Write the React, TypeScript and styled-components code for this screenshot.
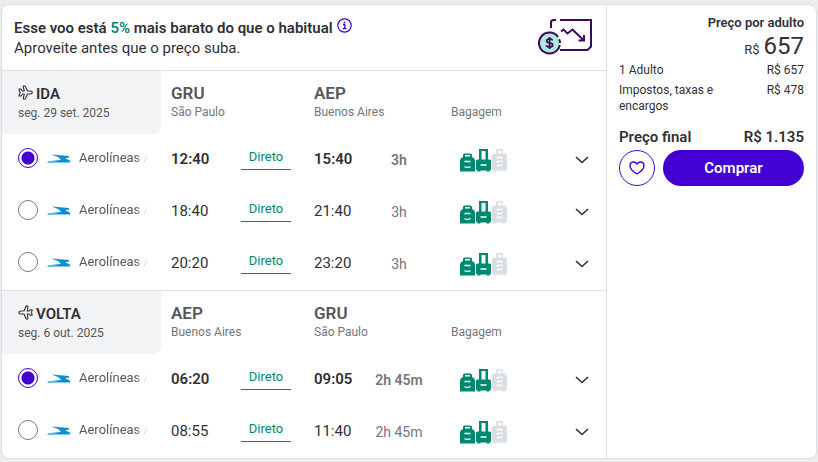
import React, { useState } from "react";
import styled, { createGlobalStyle } from "styled-components";

const color = {
  ink: "#303036",
  soft: "#55575c",
  muted: "#73767c",
  line: "#dadfe8",
  tab: "#f2f3f5",
  violet: "#4300d2",
  plum: "#3d0a5b",
  green: "#00876f",
  mint: "#aeeadb",
};

const GlobalStyle = createGlobalStyle`
  *, *::before, *::after { box-sizing: border-box; }
  body {
    margin: 0;
    background: #ededed;
    color: ${color.ink};
    font-family: Roboto, "Liberation Sans", sans-serif;
    font-size: 14px;
    line-height: 18px;
  }
  h2, h3, p, dl, dd, dt, fieldset { margin: 0; padding: 0; border: 0; font: inherit; min-width: 0; }
  svg { display: block; flex: none; }
`;

const Page = styled.main`
  padding: 4px 1px 3px;
`;
const Card = styled.article`
  display: grid;
  grid-template-columns: minmax(0, 1fr) 210px;
  border: 1px solid ${color.line};
  border-radius: 8px;
  background: #fff;
  overflow: hidden;
`;
const Trips = styled.div`
  min-width: 0;
`;
const Notice = styled.header`
  display: flex;
  align-items: center;
  justify-content: space-between;
  height: 65px;
  padding: 0 14px 1px 12px;
`;
const NoticeText = styled.p`
  font-size: 15px;
`;
const Headline = styled.span`
  display: flex;
  align-items: center;
  gap: 4px;
  font-weight: 600;
  em { font-style: normal; color: ${color.green}; }
`;
const InfoButton = styled.button`
  display: flex;
  padding: 0 0 6px;
  border: 0;
  background: none;
  cursor: pointer;
`;

const Leg = styled.fieldset`
  && { border-top: 1px solid ${color.line}; }
`;
const columns = "159px 80px 73px 56px 58px minmax(74px, 1fr) 44px";
const LegHeader = styled.header`
  display: grid;
  grid-template-columns: ${columns};
  height: 63px;
`;
const Tab = styled.div`
  padding: 13px 16px 0;
  background: ${color.tab};
  border-bottom-right-radius: 8px;
  color: ${color.soft};
  font-size: 12px;
`;
const TabTitle = styled.h2`
  display: flex;
  align-items: center;
  gap: 3px;
  height: 20px;
  color: ${color.ink};
  font-size: 15px;
  font-weight: 600;
  svg { margin-bottom: 4px; }
`;
const Place = styled.div<{ $inset?: boolean }>`
  grid-column: span 2;
  padding: 12px 0 0 ${(p) => (p.$inset ? "10px" : "0")};
  color: ${color.muted};
  font-size: 12px;
  white-space: nowrap;
`;
const Code = styled.h3`
  height: 20px;
  line-height: 20px;
  color: ${color.soft};
  font-size: 17px;
  font-weight: 600;
`;
const BagTitle = styled.div`
  align-self: end;
  padding: 0 0 13px 23px;
  color: ${color.muted};
  font-size: 12px;
`;

const Row = styled.div`
  display: grid;
  grid-template-columns: ${columns};
  align-items: center;
  height: 52px;
`;
const Carrier = styled.label`
  display: flex;
  align-items: center;
  height: 48px;
  padding: 0 12px 0 16px;
  align-self: start;
  cursor: pointer;
`;
const Radio = styled.input`
  appearance: none;
  flex: none;
  width: 20px;
  height: 20px;
  margin: 0 9px 0 0;
  border: 1px solid #77797f;
  border-radius: 50%;
  background: #fff;
  &:checked {
    border-color: ${color.violet};
    background: radial-gradient(circle, ${color.violet} 6px, #fff 7px);
  }
`;
const CarrierName = styled.span`
  flex: 1;
  min-width: 0;
  margin-left: 8px;
  white-space: nowrap;
  color: ${color.soft};
  font-size: 13px;
  mask-image: linear-gradient(to right, #000 80%, transparent 98%);
`;
const Time = styled.span<{ $on: boolean; $inset?: boolean }>`
  padding: 0 0 2px ${(p) => (p.$inset ? "10px" : "0")};
  font-size: 15px;
  font-weight: ${(p) => (p.$on ? 600 : 400)};
`;
const Stops = styled.button`
  width: 50px;
  height: 22px;
  margin-bottom: 2px;
  padding: 0 0 4px;
  border: 0;
  border-bottom: 1px solid ${color.green};
  background: none;
  color: ${color.green};
  font: inherit;
  font-size: 13px;
  line-height: 17px;
  cursor: pointer;
`;
const Duration = styled.span<{ $on: boolean }>`
  display: flex;
  justify-content: center;
  padding-bottom: 1px;
  color: ${color.muted};
  font-weight: ${(p) => (p.$on ? 600 : 400)};
  white-space: nowrap;
`;
const Bags = styled.span`
  padding-left: 32px;
`;
const Expand = styled.button`
  display: flex;
  align-items: center;
  justify-content: center;
  width: 40px;
  height: 32px;
  padding: 0;
  border: 0;
  background: none;
  cursor: pointer;
`;

const Summary = styled.aside`
  padding: 10px 12px 12px;
  border-left: 1px solid ${color.line};
`;
const PerAdult = styled.p`
  text-align: right;
  font-size: 13px;
  font-weight: 600;
  line-height: 16px;
`;
const BigPrice = styled.p`
  display: flex;
  align-items: baseline;
  justify-content: flex-end;
  gap: 4px;
  height: 31px;
  line-height: 31px;
  font-size: 13px;
  strong { font-size: 24px; font-weight: 400; }
`;
const Lines = styled.dl`
  display: grid;
  gap: 4px;
`;
const Line = styled.div<{ $total?: boolean }>`
  display: flex;
  justify-content: space-between;
  margin-top: ${(p) => (p.$total ? "11px" : "0")};
  font-size: ${(p) => (p.$total ? "15px" : "12px")};
  font-weight: ${(p) => (p.$total ? 600 : 400)};
  line-height: 16px;
  dt { max-width: 110px; }
`;
const Actions = styled.div`
  display: flex;
  gap: 8px;
  margin-top: 5px;
`;
const Favorite = styled.button`
  display: grid;
  place-items: center;
  flex: none;
  width: 36px;
  height: 36px;
  padding: 0;
  border: 1px solid ${color.violet};
  border-radius: 50%;
  background: #fff;
  cursor: pointer;
`;
const Buy = styled.button`
  flex: 1;
  height: 36px;
  border: 0;
  border-radius: 18px;
  background: ${color.violet};
  color: #fff;
  font: inherit;
  font-size: 15px;
  font-weight: 600;
  cursor: pointer;
`;

const InfoIcon = () => (
  <svg width="15" height="15" viewBox="0 0 15 15" fill="none" stroke={color.violet} strokeWidth="1.2">
    <circle cx="7.5" cy="7.5" r="6.7" />
    <path d="M6 6.5h1.8v4M5.6 10.6h4" strokeWidth="1.3" />
    <circle cx="7.5" cy="4.3" r=".9" fill={color.violet} stroke="none" />
  </svg>
);

const PriceDropIcon = () => (
  <svg width="54" height="36" viewBox="0 0 54 36" fill="none" stroke={color.plum} strokeWidth="2">
    <path d="M13 9V3.500Q13 1 15.500 1H18M22 1H53V27.500L49.500 31H22" />
    <path d="M23 12.500l2.500-2 4 4 5-4 11 10.500M40.500 21.500H46V16" />
    <circle cx="11.500" cy="24" r="10.500" fill={color.mint} stroke="none" />
    <path d="M20 17.800A10.500 10.500 0 1 0 21.800 26M21.200 20.300q.8 1.700.8 3.700" />
    <path d="M14.500 21.500q-.5-1.700-3-1.700t-2.900 1.900q0 1.600 2.900 2.100 3.200.5 3.200 2.300 0 2-3.100 2-2.800 0-3.300-2M11.500 18v12" strokeWidth="1.700" />
  </svg>
);

const PlaneIcon = ({ back }: { back?: boolean }) => (
  <svg width="15" height="15" viewBox="0 0 15 15" fill="none" stroke={color.ink} strokeWidth="1.1" strokeLinejoin="round">
    {back ? (
      <path d="M.8 7.500Q.8 6.200 2.500 6H6L8 1.500Q8.300.8 9.300.9L10 1.500 9.300 6h2l1-1.300h1.900L13.500 7.500l.7 2.800h-1.900L11.300 9h-2l.7 4.500-.7.600q-1 .1-1.300-.6L6 9H2.500Q.8 8.800.8 7.500z" />
    ) : (
      <path d="M1 4h2l1.500 2h1.800L5.200 1.700Q5 .8 6 .8 7 .8 7.500 1.700L9.500 6h2.700q2.100.1 2.100 1.500T12.200 9H9.500l-2 4.300q-.5.900-1.500.9-1 0-.8-.9L6.300 9H4.500L3 11H1L2 7.500z" />
    )}
  </svg>
);

const CarrierLogo = () => (
  <svg width="24" height="9" viewBox="0 0 24 9">
    <path d="M4.500.5 22 2 22 3.500 18 4.300 22.500 6.200 23.500 8.500H0L2 7.300 14 6 11.500 3.200z" fill="#0a8fd6" />
    <path d="M0 8.500 2 7.300 10 6.500 9 8.500z" fill="#5bb7e6" />
  </svg>
);

const BagIcons = () => (
  <svg width="48" height="23" viewBox="0 0 48 23">
    <g fill={color.green}>
      <path d="M0 22.500V12q0-3 3-4V6q0-1.500 1.500-1.500h6Q12 4.500 12 6v2q3 1 3 4v10.500zM5 6v1.500h5V6z" fillRule="evenodd" />
      <path d="M19 0h9v10.500h1.500q1.500 0 1.500 1.500v8q0 1.500-1.500 1.500v1h-3v-1h-6v1h-3v-1Q16 21.500 16 20v-8q0-1.500 1.500-1.500H19zM21.500 2v8.500h4V2z" fillRule="evenodd" />
    </g>
    <path d="M36 4.500V1.500Q36 0 37 0h5q1 0 1 1V4.500h2q2 0 2 2v13q0 2-1.500 2v.8h-3V21.500h-6v.8h-3V21.500Q32 21.500 32 19.500V6.500q0-2 2-2zM38 1.500v3h3.500V1.500z" fill="#dadfe6" fillRule="evenodd" />
    <path d="M4.500 12.500h6M4.500 17.500Q7.500 19.500 10.500 17.500M20.500 16h6M36.500 8.500h6M36.500 12.500h6M36.500 16.500h6" fill="none" stroke="#fff" strokeWidth="1.500" />
  </svg>
);

const ChevronIcon = () => (
  <svg width="14" height="8" viewBox="0 0 14 8" fill="none" stroke={color.ink} strokeWidth="1.600">
    <path d="M1 1l6 5.500L13 1" />
  </svg>
);

const HeartIcon = () => (
  <svg width="16" height="14" viewBox="0 0 16 14" fill="none" stroke={color.violet} strokeWidth="1.400">
    <path d="M8 13C5 11.300 1 8.300 1 4.800 1 2.500 2.500 1 4.500 1 6.200 1 7.300 1.900 8 3.100 8.700 1.900 9.800 1 11.500 1 13.500 1 15 2.500 15 4.800 15 8.300 11 11.300 8 13z" strokeLinejoin="round" />
  </svg>
);

interface Flight { out: string; arrive: string; length: string }
interface LegData {
  id: string;
  title: string;
  date: string;
  from: [string, string];
  to: [string, string];
  back?: boolean;
  flights: Flight[];
}

const legs: LegData[] = [
  {
    id: "ida", title: "IDA", date: "seg. 29 set. 2025",
    from: ["GRU", "São Paulo"], to: ["AEP", "Buenos Aires"],
    flights: [
      { out: "12:40", arrive: "15:40", length: "3h" },
      { out: "18:40", arrive: "21:40", length: "3h" },
      { out: "20:20", arrive: "23:20", length: "3h" },
    ],
  },
  {
    id: "volta", title: "VOLTA", date: "seg. 6 out. 2025", back: true,
    from: ["AEP", "Buenos Aires"], to: ["GRU", "São Paulo"],
    flights: [
      { out: "06:20", arrive: "09:05", length: "2h 45m" },
      { out: "08:55", arrive: "11:40", length: "2h 45m" },
    ],
  },
];

function TripLeg({ leg }: { leg: LegData }) {
  const [selected, setSelected] = useState(0);
  return (
    <Leg aria-label={leg.title}>
      <LegHeader>
        <Tab>
          <TabTitle><PlaneIcon back={leg.back} />{leg.title}</TabTitle>
          {leg.date}
        </Tab>
        <Place $inset><Code>{leg.from[0]}</Code>{leg.from[1]}</Place>
        <Place><Code>{leg.to[0]}</Code>{leg.to[1]}</Place>
        <BagTitle>Bagagem</BagTitle>
      </LegHeader>
      {leg.flights.map((f, i) => {
        const on = i === selected;
        return (
          <Row key={f.out}>
            <Carrier>
              <Radio type="radio" name={leg.id} checked={on} onChange={() => setSelected(i)} />
              <CarrierLogo />
              <CarrierName>Aerolíneas A</CarrierName>
            </Carrier>
            <Time $on={on} $inset>{f.out}</Time>
            <Stops type="button">Direto</Stops>
            <Time $on={on}>{f.arrive}</Time>
            <Duration $on={on}>{f.length}</Duration>
            <Bags><BagIcons /></Bags>
            <Expand type="button" aria-label="Detalhes"><ChevronIcon /></Expand>
          </Row>
        );
      })}
    </Leg>
  );
}

export default function App() {
  return (
    <Page>
      <GlobalStyle />
      <Card>
        <Trips>
          <Notice>
            <NoticeText>
              <Headline>
                <span>Esse voo está <em>5%</em> mais barato do que o habitual</span>
                <InfoButton type="button" aria-label="Informações"><InfoIcon /></InfoButton>
              </Headline>
              Aproveite antes que o preço suba.
            </NoticeText>
            <PriceDropIcon />
          </Notice>
          {legs.map((leg) => <TripLeg key={leg.id} leg={leg} />)}
        </Trips>
        <Summary>
          <PerAdult>Preço por adulto</PerAdult>
          <BigPrice>R$ <strong>657</strong></BigPrice>
          <Lines>
            <Line><dt>1 Adulto</dt><dd>R$ 657</dd></Line>
            <Line><dt>Impostos, taxas e encargos</dt><dd>R$ 478</dd></Line>
            <Line $total><dt>Preço final</dt><dd>R$ 1.135</dd></Line>
          </Lines>
          <Actions>
            <Favorite type="button" aria-label="Favoritar"><HeartIcon /></Favorite>
            <Buy type="button">Comprar</Buy>
          </Actions>
        </Summary>
      </Card>
    </Page>
  );
}
